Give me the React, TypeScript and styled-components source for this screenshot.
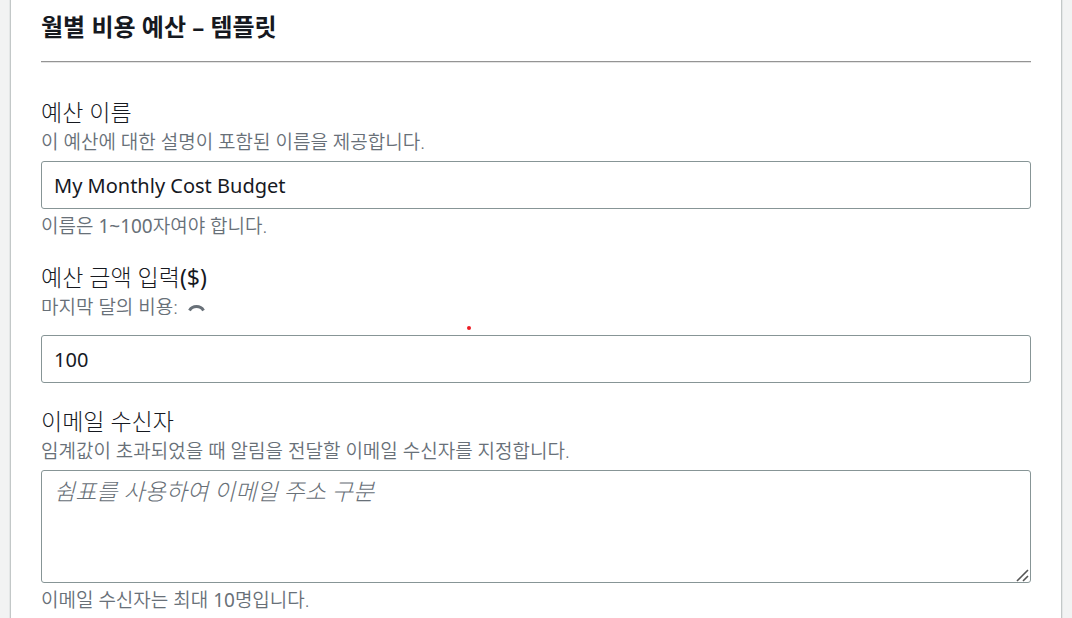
import React from "react";
import styled, { createGlobalStyle } from "styled-components";

const GlobalStyle = createGlobalStyle`
  * { box-sizing: border-box; }
  body {
    margin: 0;
    background: #f2f3f3;
    color: #16191f;
    font-family: "Noto Sans", "Noto Sans CJK KR", sans-serif;
  }
`;

const Page = styled.main`
  padding: 0 10px;
`;

const Panel = styled.section`
  position: relative;
  min-height: 100vh;
  padding: 10px 30px 0;
  background: #fff;
  border: solid #c3c8c8;
  border-width: 0 1px;
  box-shadow: 0 0 0 1px #e4e7e7;
`;

const Title = styled.h2`
  margin: 0;
  padding-bottom: 17px;
  border-bottom: 1px solid #949494;
  box-shadow: 0 1px 0 #e4e4e4;
  font-size: 24px;
  line-height: 34px;
  font-weight: 700;
`;

const Form = styled.form`
  display: flex;
  flex-direction: column;
  gap: 24px;
  padding-top: 36px;
`;

const Field = styled.div<{ $gap?: number }>`
  display: flex;
  flex-direction: column;

  input,
  textarea {
    margin-top: ${(p) => p.$gap ?? 4}px;
  }
`;

const Label = styled.label`
  font-size: 23px;
  line-height: 29px;
  font-weight: 300;
`;

const Note = styled.p`
  margin: 0;
  color: #687078;
  font-size: 19px;
  line-height: 30px;
  font-weight: 350;
`;

const Hint = styled(Note)`
  margin-top: 4px;
  line-height: 26px;
`;

const Latin = styled.span`
  font-weight: 400;
`;

const Spinner = styled.svg`
  margin-left: 10px;
  vertical-align: 1px;
`;

const TextInput = styled.input`
  width: 100%;
  height: 48px;
  padding: 0 12px;
  border: 1px solid #879596;
  border-radius: 3px;
  background: #fff;
  color: #16191f;
  font-family: inherit;
  font-size: 20px;
  outline: none;
`;

const TextArea = styled.textarea`
  display: block;
  width: 100%;
  height: 113px;
  padding: 5px 12px;
  border: 1px solid #879596;
  border-radius: 3px;
  background: #fff;
  color: #16191f;
  font-family: inherit;
  font-size: 23px;
  line-height: 30px;
  font-weight: 300;
  resize: vertical;
  outline: none;

  &::placeholder {
    color: #687078;
    font-style: italic;
    opacity: 1;
  }

  &::-webkit-resizer {
    background: transparent;
  }
`;

const AreaWrap = styled.div`
  position: relative;
`;

const Grip = styled.svg`
  position: absolute;
  right: 2px;
  bottom: 1px;
  pointer-events: none;
`;

const Pointer = styled.span`
  position: absolute;
  top: 326px;
  left: 456px;
  width: 4px;
  height: 4px;
  border-radius: 50%;
  background: #ed1c24;
`;

export default function App() {
  return (
    <>
      <GlobalStyle />
      <Page>
        <Panel>
          <Title>월별 비용 예산 – 템플릿</Title>
          <Form>
            <Field>
              <Label htmlFor="name">예산 이름</Label>
              <Note>이 예산에 대한 설명이 포함된 이름을 제공합니다.</Note>
              <TextInput id="name" defaultValue="My Monthly Cost Budget" />
              <Hint>
                이름은 <Latin>1~100</Latin>자여야 합니다.
              </Hint>
            </Field>
            <Field $gap={13}>
              <Label htmlFor="amount">
                예산 금액 입력<Latin>($)</Latin>
              </Label>
              <Note>
                마지막 달의 비용:
                <Spinner width="17" height="10" viewBox="0 0 17 10" aria-hidden="true">
                  <path d="M1.5 7.5C4.5 2.3 12.5 2.3 15.5 7.5" fill="none" stroke="#687078" strokeWidth="3" />
                </Spinner>
              </Note>
              <TextInput id="amount" defaultValue="100" />
            </Field>
            <Field>
              <Label htmlFor="recipients">이메일 수신자</Label>
              <Note>임계값이 초과되었을 때 알림을 전달할 이메일 수신자를 지정합니다.</Note>
              <AreaWrap>
                <TextArea id="recipients" placeholder="쉼표를 사용하여 이메일 주소 구분" />
                <Grip width="13" height="13" viewBox="0 0 13 13" aria-hidden="true">
                  <path d="M1 12L12 1M7 12L12 7" fill="none" stroke="#555" strokeWidth="1.6" />
                </Grip>
              </AreaWrap>
              <Hint>
                이메일 수신자는 최대 <Latin>10</Latin>명입니다.
              </Hint>
            </Field>
          </Form>
          <Pointer />
        </Panel>
      </Page>
    </>
  );
}
